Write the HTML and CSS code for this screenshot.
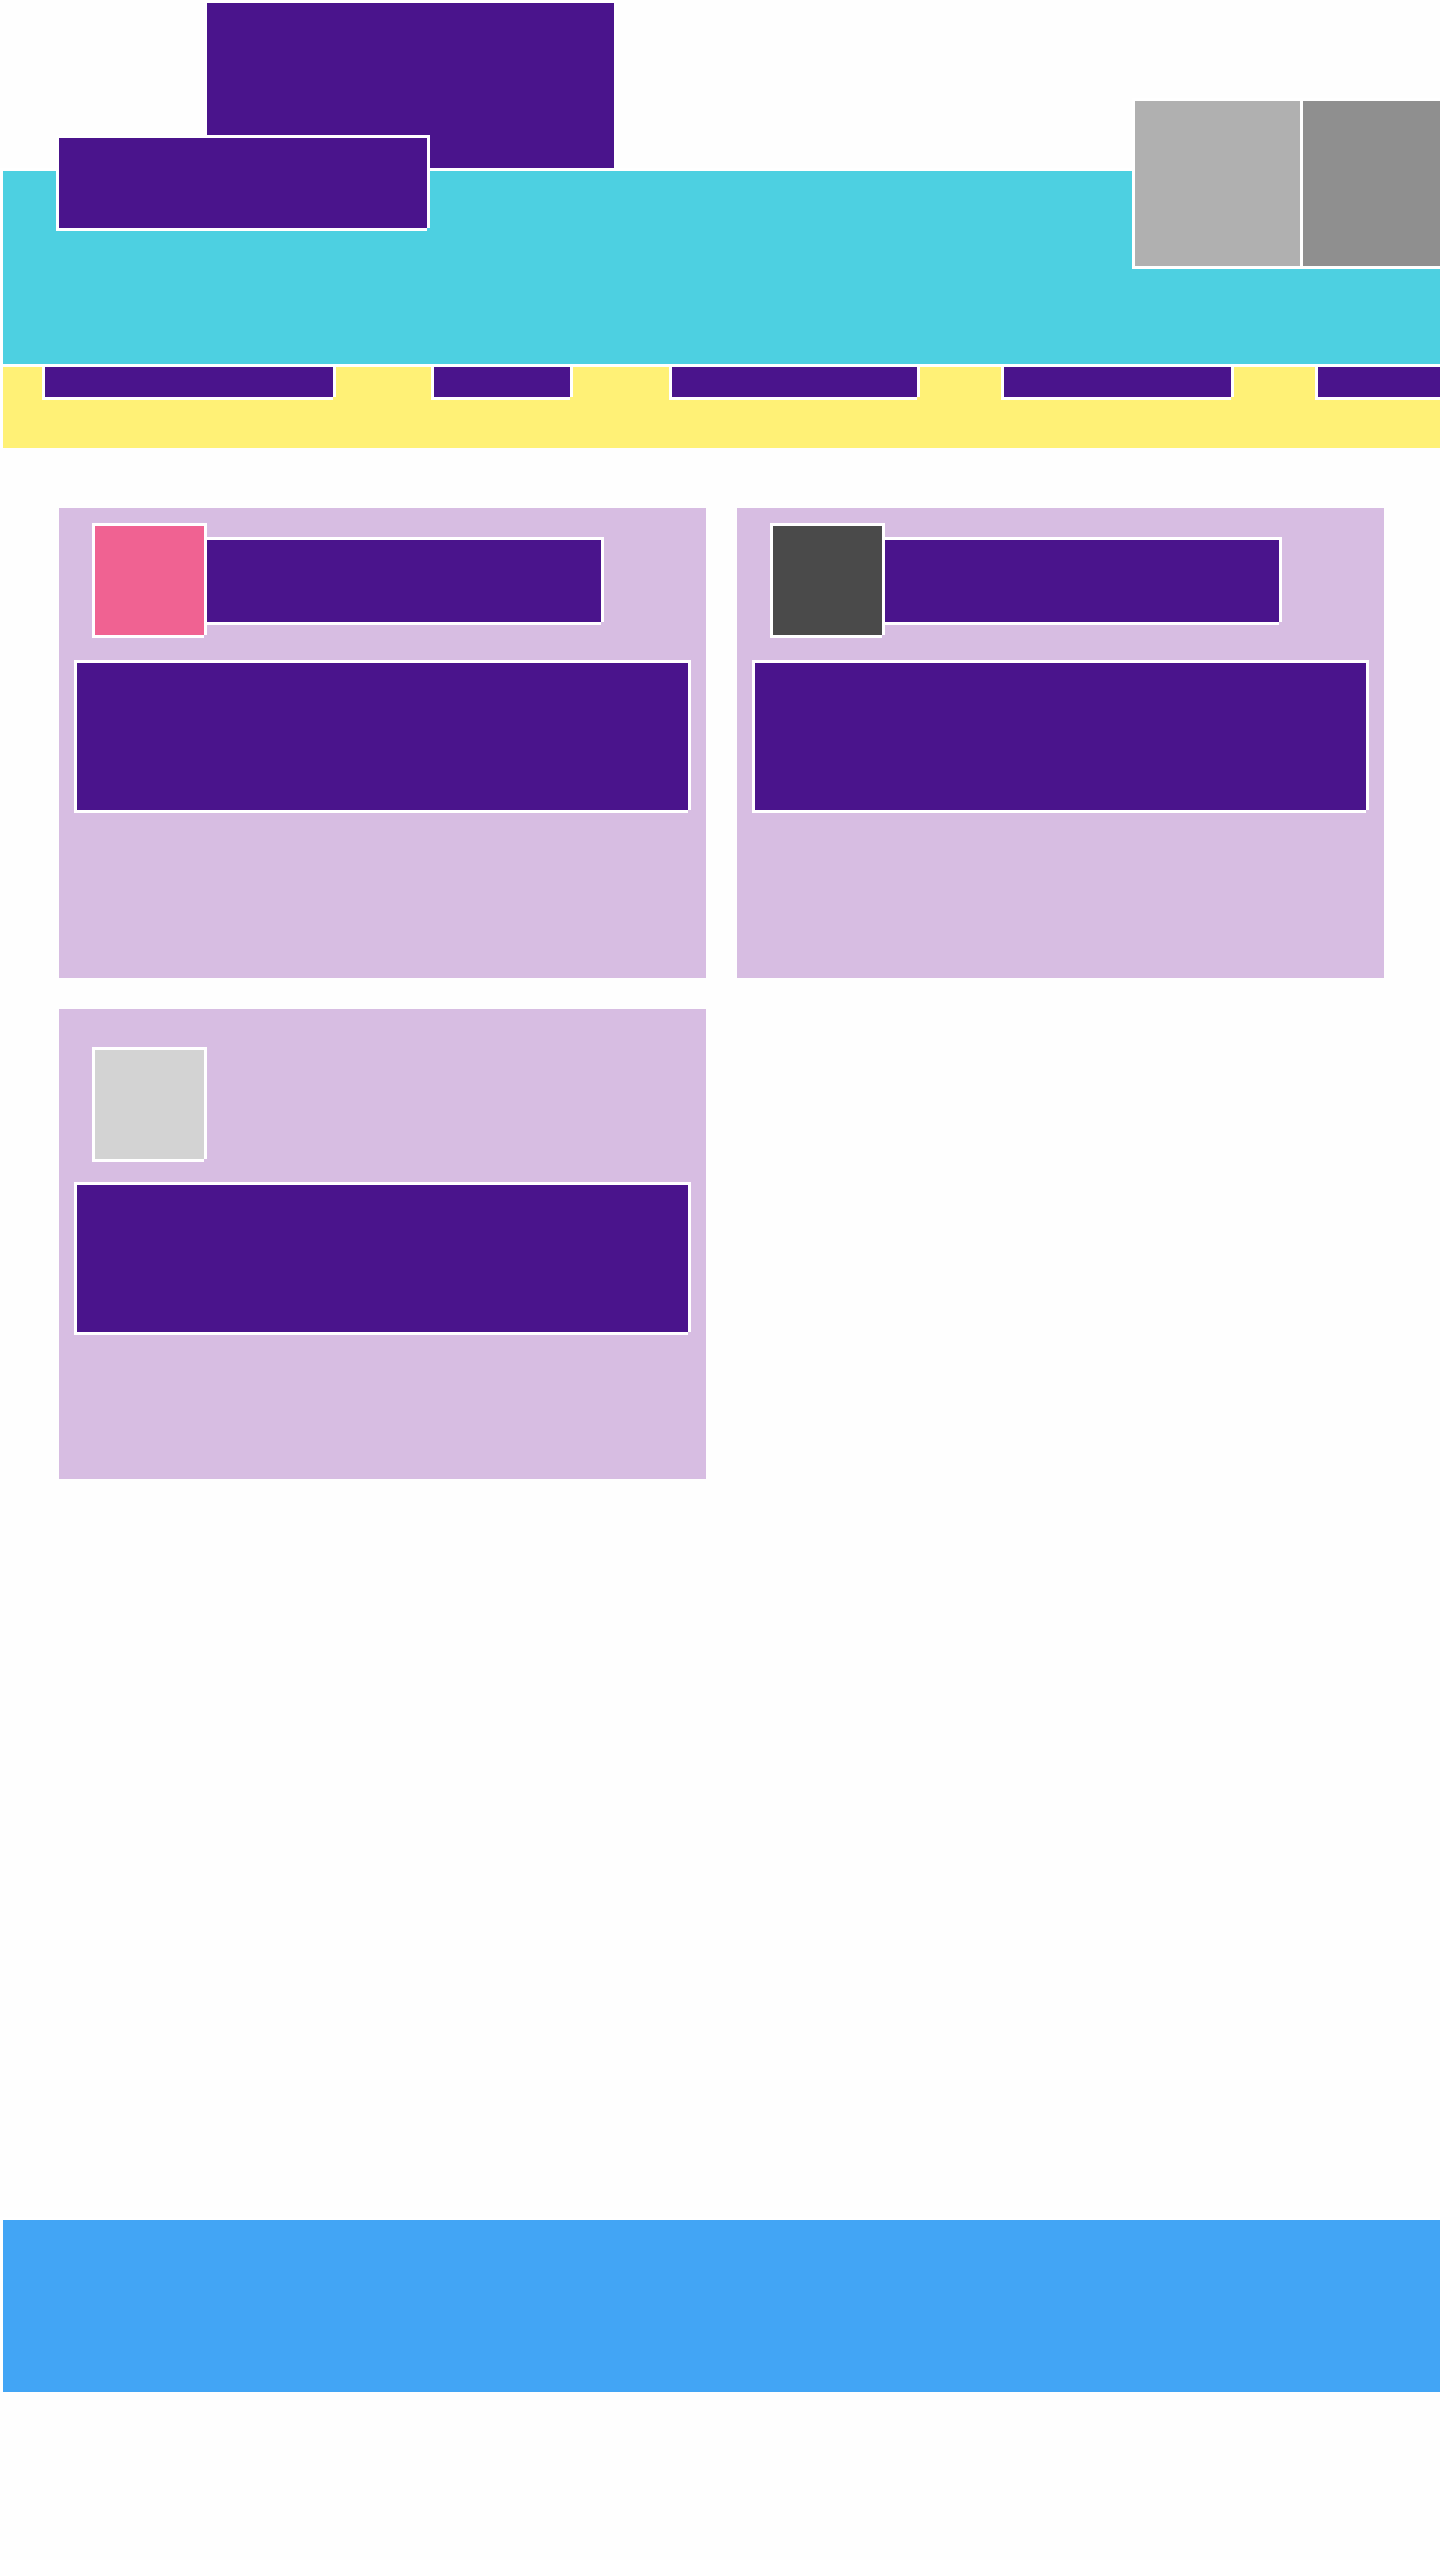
FILE: index.html
```html
<!DOCTYPE html>
<html lang="en">
<head>
    <meta charset="UTF-8">
    <meta name="viewport" content="width=device-width, initial-scale=1.0">
    <title>Layout</title>
    <link rel="stylesheet" href="styles.css">
</head>
<body>
    <header class="site-header">
        <div class="header-top">
            <div class="blk banner"></div>
        </div>
        <div class="blk hero"></div>
        <nav class="blk nav">
            <div class="blk nav-item nav-1"></div>
            <div class="blk nav-item nav-2"></div>
            <div class="blk nav-item nav-3"></div>
            <div class="blk nav-item nav-4"></div>
            <div class="blk nav-item nav-5"></div>
        </nav>

        <!-- overlapping pieces -->
        <div class="blk logo"></div>
        <div class="actions">
            <div class="blk action action-light"></div>
            <div class="blk action action-dark"></div>
        </div>
    </header>

    <main class="content">
        <div class="card-grid">
            <div class="card">
                <div class="card-head">
                    <div class="blk thumb thumb-pink"></div>
                    <div class="blk card-title"></div>
                </div>
                <div class="blk card-body"></div>
            </div>
            <div class="card">
                <div class="card-head">
                    <div class="blk thumb thumb-dark"></div>
                    <div class="blk card-title"></div>
                </div>
                <div class="blk card-body"></div>
            </div>
            <div class="card card-plain">
                <div class="card-head">
                    <div class="blk thumb thumb-light"></div>
                </div>
                <div class="blk card-body"></div>
            </div>
        </div>
    </main>

    <footer class="blk footer"></footer>
</body>
</html>
```

FILE: styles.css
```css
* {
    margin: 0;
    padding: 0;
    box-sizing: border-box;
}
body {
    background-color: #fefefe;
    font-family: 'Liberation Sans', Arial, sans-serif;
}

/* white edge every block carries */
.blk {
    border-top: 3px solid #fff;
    border-left: 3px solid #fff;
    box-shadow: 3px 0 0 #fff, 0 3px 0 #fff;
}

/* header */
.site-header {
    position: relative;
    height: 448px;
    overflow: hidden;
}
.header-top {
    display: flex;
    height: 168px;
    padding-left: 204px;
}
.banner {
    width: 410px;
    height: 168px;
    background-color: #4a148c;
}
.hero {
    height: 196px;
    background-color: #4dd0e1;
    box-shadow: none;
}
.nav {
    display: flex;
    align-items: flex-start;
    height: 84px;
    padding-left: 39px;
    background-color: #fff176;
    box-shadow: none;
    overflow: hidden;
}
.nav-item {
    flex-shrink: 0;
    height: 30px;
    border-top: none;
    background-color: #4a148c;
}
.nav-1 { width: 291px; margin-right: 98px; }
.nav-2 { width: 139px; margin-right: 99px; }
.nav-3 { width: 248px; margin-right: 84px; }
.nav-4 { width: 230px; margin-right: 84px; }
.nav-5 { width: 200px; }

.logo {
    position: absolute;
    left: 56px;
    top: 135px;
    width: 371px;
    height: 93px;
    background-color: #4a148c;
}
.actions {
    position: absolute;
    left: 1132px;
    top: 98px;
    display: flex;
}
.action {
    width: 168px;
    height: 168px;
}
.action-light {
    background-color: #b0b0b0;
}
.action-dark {
    background-color: #8f8f8f;
}

/* cards */
.content {
    height: 1769px;
    padding: 60px 0 0 59px;
}
.card-grid {
    display: grid;
    grid-template-columns: 647px 647px;
    gap: 31px;
}
.card {
    height: 470px;
    background-color: #d7bde2;
}
.card-head {
    display: flex;
    align-items: center;
    padding: 15px 0 0 33px;
}
.thumb {
    width: 112px;
    height: 112px;
}
.thumb-pink { background-color: #f06292; }
.thumb-dark { background-color: #4a4a4a; }
.thumb-light { background-color: #d3d3d3; }
.card-title {
    width: 397px;
    height: 85px;
    background-color: #4a148c;
}
.card-body {
    width: 614px;
    height: 150px;
    margin: 25px 0 0 15px;
    background-color: #4a148c;
}
.card-plain .card-head {
    padding-top: 38px;
}
.card-plain .card-body {
    margin-top: 23px;
}

/* footer */
.footer {
    height: 175px;
    background-color: #42a5f5;
    box-shadow: none;
}
```
